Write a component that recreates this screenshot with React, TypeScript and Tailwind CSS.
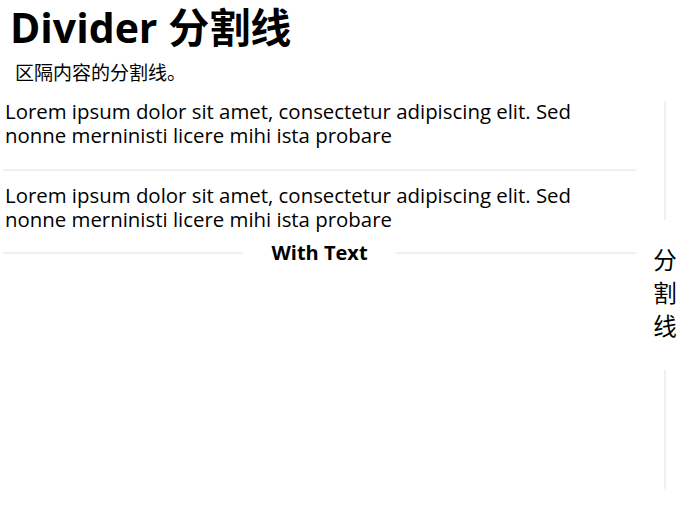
import React from 'react';

const Paragraph = () => (
  <p className="pl-[2px] pr-[16px] text-[20.4px] leading-[24px] text-black">
    Lorem ipsum dolor sit amet, consectetur adipiscing elit. Sed nonne merninisti licere mihi ista probare
  </p>
);

const App = () => {
  return (
    <div className="h-[511px] w-[691px] bg-white text-black font-['Open_Sans','Noto_Sans_CJK_SC',sans-serif]">
      {/* Header */}
      <div className="px-[10px] pt-[2px]">
        <h1 className="text-[41px] font-bold leading-[50px]">Divider 分割线</h1>
        <p className="mt-[9px] pl-[5px] text-[19px] leading-[24px]">区隔内容的分割线。</p>
      </div>

      <div className="mt-[14px] flex">
        {/* Horizontal dividers */}
        <div className="w-[636px] shrink-0 pl-[3px]">
          <Paragraph />
          <div className="mt-[22px] mb-[12px] h-[2px] bg-[#f0f0f0]"></div>
          <Paragraph />
          <div className="mt-[9px] flex items-center gap-[28px]">
            <div className="h-[2px] flex-1 bg-[#f0f0f0]"></div>
            <span className="text-[20px] font-bold leading-[26px]">With Text</span>
            <div className="h-[2px] flex-1 bg-[#f0f0f0]"></div>
          </div>
        </div>

        {/* Vertical divider */}
        <div className="mt-[2px] flex w-[55px] shrink-0 flex-col items-center pl-[3px]">
          <div className="h-[119px] w-[2px] bg-[#f0f0f0]"></div>
          <div className="flex flex-col pt-[24px] pb-[27px] text-[23.5px] leading-[33px]">
            <span>分</span>
            <span>割</span>
            <span>线</span>
          </div>
          <div className="h-[119px] w-[2px] bg-[#f0f0f0]"></div>
        </div>
      </div>
    </div>
  );
};

export default App;
